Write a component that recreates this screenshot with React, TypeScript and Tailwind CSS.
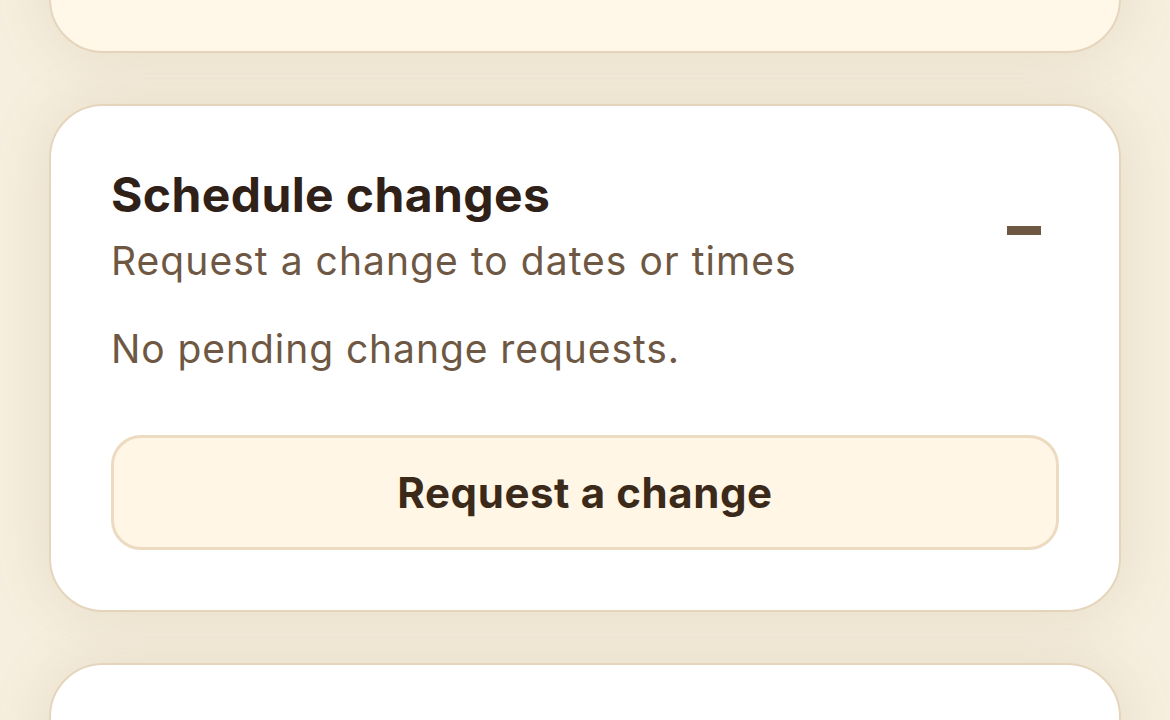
import React from "react";

function Card({ className = "", children }: { className?: string; children?: React.ReactNode }) {
  return (
    <div
      className={`rounded-[54px] border-2 border-[#e6d5bd] shadow-[0_0_60px_rgba(150,120,70,0.16)] ${className}`}
    >
      {children}
    </div>
  );
}

export default function App() {
  return (
    <div
      className="w-[1170px] h-[720px] overflow-hidden bg-[#f6efdf] px-[49px]"
      style={{ fontFamily: "Inter, 'Noto Sans', sans-serif" }}
    >
      <div className="flex flex-col gap-[51px] -mt-[200px]">
        {/* previous section, scrolled mostly out of view */}
        <Card className="h-[253px] bg-[#fff7e8]" />

        <Card className="bg-white px-[60px] pt-[60px] pb-[60px]">
          <div className="flex items-center">
            <div className="flex-1">
              <h2 className="text-[48px] leading-[58px] font-bold tracking-[0.4px] text-[#2f2118]">
                Schedule changes
              </h2>
              <p className="mt-[8px] text-[39px] leading-[58px] tracking-[1.05px] text-[#6e5843]">
                Request a change to dates or times
              </p>
            </div>
            <div className="w-[70px] flex items-center justify-center pt-[4px] pr-[1px]">
              <div className="w-[34px] h-[9px] bg-[#6e5843]" />
            </div>
          </div>

          <p className="mt-[30px] text-[39px] leading-[58px] tracking-[0.93px] text-[#6e5843]">
            No pending change requests.
          </p>

          <button className="mt-[57px] w-full h-[115px] rounded-[30px] border-[3px] border-[#ecdbc0] bg-[#fff6e6] text-[42px] font-bold tracking-[0.6px] text-[#3b2a1a]">
            Request a change
          </button>
        </Card>

        <Card className="h-[300px] bg-white" />
      </div>
    </div>
  );
}
